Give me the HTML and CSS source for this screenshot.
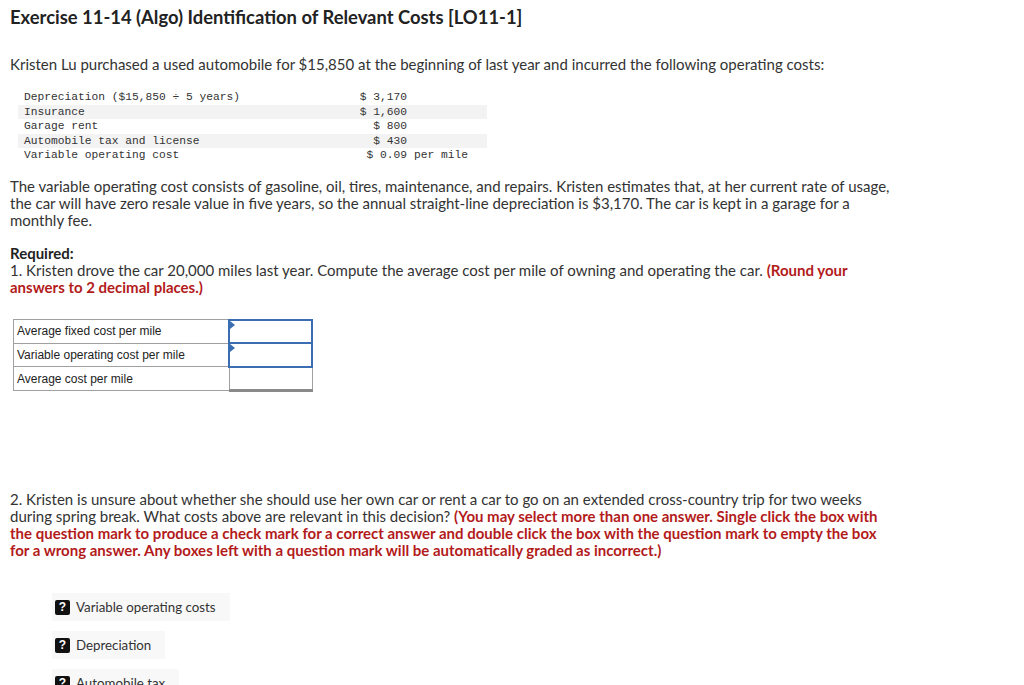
FILE: index.html
```html
<!DOCTYPE html>
<html>
<head>
<meta charset="utf-8">
<link rel="stylesheet" href="styles.css">
</head>
<body>
<div class="page">
  <h1 class="title">Exercise 11-14 (Algo) Identification of Relevant Costs [<b>LO11-1</b>]</h1>
  <p class="intro">Kristen Lu purchased a used automobile for $15,850 at the beginning of last year and incurred the following operating costs:</p>
  <div class="costs">
    <div class="crow"><span class="clabel">Depreciation ($15,850 ÷ 5 years)</span><span class="camt">$ 3,170</span><span class="cunit"></span></div>
    <div class="crow alt"><span class="clabel">Insurance</span><span class="camt">$ 1,600</span><span class="cunit"></span></div>
    <div class="crow"><span class="clabel">Garage rent</span><span class="camt">$ 800</span><span class="cunit"></span></div>
    <div class="crow alt"><span class="clabel">Automobile tax and license</span><span class="camt">$ 430</span><span class="cunit"></span></div>
    <div class="crow"><span class="clabel">Variable operating cost</span><span class="camt">$ 0.09</span><span class="cunit">per mile</span></div>
  </div>
  <p class="para">The variable operating cost consists of gasoline, oil, tires, maintenance, and repairs. Kristen estimates that, at her current rate of usage, the car will have zero resale value in five years, so the annual straight-line depreciation is $3,170. The car is kept in a garage for a monthly fee.</p>
  <div class="required">
    <div class="req-head">Required:</div>
    <div>1. Kristen drove the car 20,000 miles last year. Compute the average cost per mile of owning and operating the car. <span class="red">(Round your answers to 2 decimal places.)</span></div>
  </div>
  <table class="answers">
    <tr><td class="alabel">Average fixed cost per mile</td><td class="ainput blue"><span class="flag"></span></td></tr>
    <tr><td class="alabel">Variable operating cost per mile</td><td class="ainput blue"><span class="flag"></span></td></tr>
    <tr><td class="alabel">Average cost per mile</td><td class="ainput total"></td></tr>
  </table>
  <div class="q2">2. Kristen is unsure about whether she should use her own car or rent a car to go on an extended cross-country trip for two weeks during spring break. What costs above are relevant in this decision? <span class="red">(You may select more than one answer. Single click the box with the question mark to produce a check mark for a correct answer and double click the box with the question mark to empty the box for a wrong answer. Any boxes left with a question mark will be automatically graded as incorrect.)</span></div>
  <div class="choices">
    <div class="choice"><span class="qbox">?</span><span>Variable operating costs</span></div>
    <div class="choice"><span class="qbox">?</span><span>Depreciation</span></div>
    <div class="choice"><span class="qbox">?</span><span>Automobile tax</span></div>
  </div>
</div>
</body>
</html>
```
FILE: styles.css
```css
html, body {
  margin: 0;
  padding: 0;
  background: #fff;
  height: 685px;
  overflow: hidden;
}
.page {
  padding: 7px 0 0 10px;
  font-family: Lato, "Open Sans", sans-serif;
  color: #333;
  font-size: 15px;
}
.title {
  margin: 0;
  font-size: 18.4px;
  line-height: 20px;
  font-weight: 700;
  color: #222;
}
.title b { font-weight: 700; }
.intro {
  margin: 28.5px 0 0 0;
  line-height: 17px;
}
.costs {
  margin: 17.5px 0 0 8px;
  width: 469px;
  font-family: "Liberation Mono", "DejaVu Sans Mono", monospace;
  font-size: 11.25px;
  color: #333;
}
.crow {
  display: grid;
  grid-template-columns: 320px 63px auto;
  height: 14.5px;
  line-height: 14.5px;
  padding-left: 6px;
}
.crow.alt { background: #f3f3f3; }
.camt { text-align: right; white-space: pre; }
.cunit { padding-left: 7px; }
.para {
  margin: 15px 0 0 0;
  line-height: 17px;
  width: 892px;
}
.required {
  margin-top: 16px;
  line-height: 17px;
  width: 870px;
}
.req-head { font-weight: 700; color: #222; }
.red { color: #b31b1b; font-weight: 700; }
.answers {
  margin: 23px 0 0 3px;
  border-collapse: collapse;
  font-family: "Liberation Sans", Arial, sans-serif;
  font-size: 12px;
  color: #222;
}
.answers td {
  height: 21.5px;
  padding: 0;
  border: 1px solid #a0a0a0;
}
.alabel {
  width: 211px;
  padding-left: 3px !important;
}
.ainput {
  width: 81px;
  position: relative;
}
.ainput.blue {
  border: 2px solid #3b6db3 !important;
}
.ainput.total {
  border-top: 2px solid #111 !important;
  border-bottom: 3px solid #8a8a8a !important;
}
.flag {
  position: absolute;
  left: 0;
  top: 0;
  width: 0;
  height: 0;
  border-top: 4px solid transparent;
  border-bottom: 4px solid transparent;
  border-left: 5px solid #3b6db3;
}
.q2 {
  margin-top: 99px;
  line-height: 17px;
  width: 888px;
}
.choices {
  margin: 34px 0 0 42px;
  display: flex;
  flex-direction: column;
  align-items: flex-start;
  gap: 10px;
}
.choice {
  display: flex;
  align-items: center;
  gap: 6px;
  height: 28px;
  padding: 0 14px 0 3px;
  background: #f8f8f8;
  font-size: 13.3px;
  color: #333;
}
.qbox {
  width: 15px;
  height: 15px;
  background: #111;
  color: #fff;
  border-radius: 2px;
  font-weight: 900;
  font-size: 12px;
  line-height: 15px;
  text-align: center;
  font-family: "Liberation Sans", Arial, sans-serif;
}
```
